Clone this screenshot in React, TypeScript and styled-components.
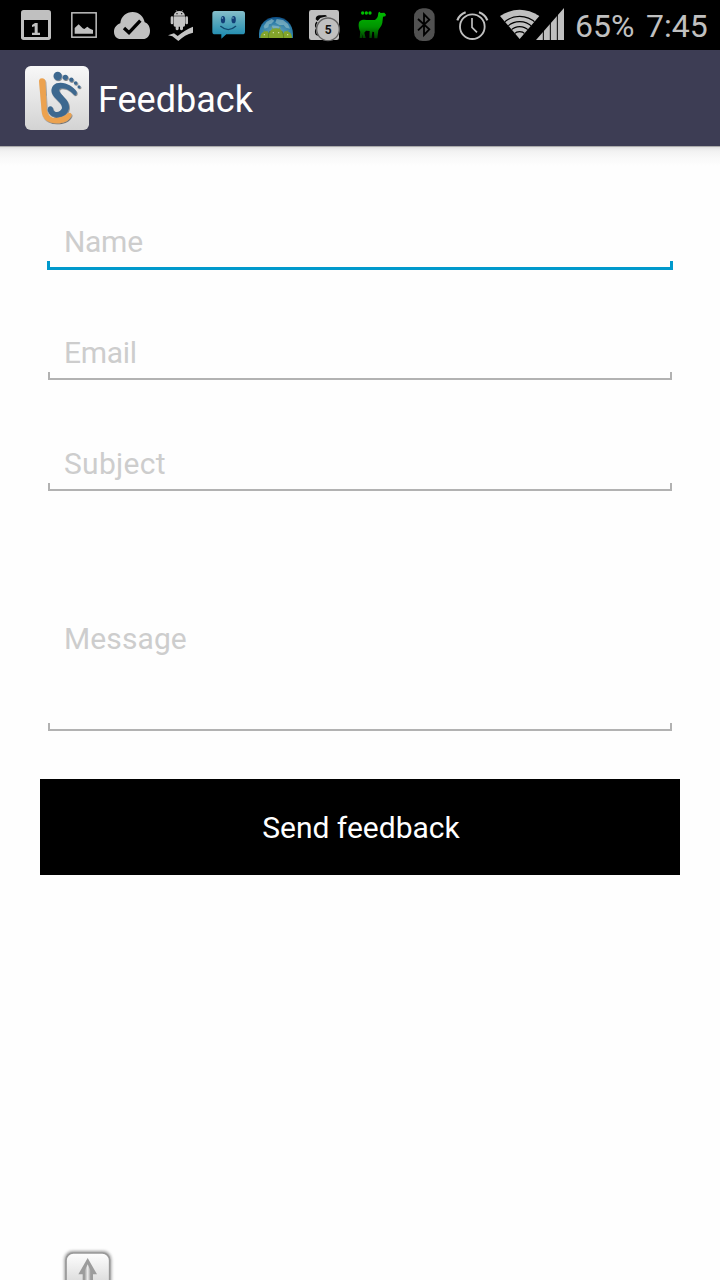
import React from "react";
import styled, { createGlobalStyle } from "styled-components";

const GlobalStyle = createGlobalStyle`
  *, *::before, *::after { box-sizing: border-box; }
  body { margin: 0; background: #fefefe; font-family: Roboto, "Liberation Sans", sans-serif; }
`;

const Screen = styled.div`
  width: 720px;
  height: 1280px;
  display: flex;
  flex-direction: column;
  overflow: hidden;
  background: #fefefe;
`;

const StatusBar = styled.header`
  height: 50px;
  flex: none;
  display: flex;
  align-items: center;
  padding-left: 12px;
  background: #000;
  color: #c0c0c0;
`;

const StatusIcon = styled.svg<{ $width?: number; $gapBefore?: number }>`
  display: block;
  flex: none;
  width: ${(p) => p.$width ?? 48}px;
  height: 50px;
  margin-left: ${(p) => p.$gapBefore ?? 0}px;
`;

const StatusText = styled.span<{ $width: number }>`
  flex: none;
  width: ${(p) => p.$width}px;
  font-size: 32px;
  line-height: 38px;
  padding-top: 2px;
  white-space: nowrap;
`;

const StatusReadout = styled.div`
  display: flex;
  padding-left: 7px;
`;

const ActionBar = styled.div`
  height: 96px;
  flex: none;
  display: flex;
  align-items: center;
  gap: 9px;
  padding-left: 25px;
  background: #3d3d54;
`;

const AppLogo = styled.svg`
  display: block;
  width: 64px;
  height: 64px;
`;

const Title = styled.h1`
  margin: 0;
  padding-top: 4px;
  font-size: 36px;
  line-height: 42px;
  font-weight: 400;
  color: #fff;
`;

const BarShadow = styled.div`
  height: 20px;
  flex: none;
  background: linear-gradient(#a6a6a6 0, #b0b0b0 1px, #e0e0e0 1px, #ececec 3px, #f3f3f3 6px, #f9f9f9 12px, #fefefe 20px);
`;

const Form = styled.form`
  flex: 1;
  display: flex;
  flex-direction: column;
  padding: 58px 40px 0;
`;

const Field = styled.label<{ $height: number }>`
  display: flex;
  flex-direction: column;
  flex: none;
  height: ${(p) => p.$height}px;
`;

const Hint = styled.span<{ $spacing?: number }>`
  padding-left: 24px;
  font-size: 30px;
  line-height: 36px;
  letter-spacing: ${(p) => p.$spacing ?? 0}px;
  color: #cdcdcd;
`;

const Underline = styled.span<{ $active?: boolean; $offset?: number }>`
  display: block;
  margin: ${(p) => p.$offset ?? 1}px ${(p) => (p.$active ? 7 : 8)}px 0;
  height: ${(p) => (p.$active ? 9 : 8)}px;
  border: ${(p) => (p.$active ? "3px solid #0099cc" : "2px solid #b2b2b2")};
  border-top: 0;
`;

const SendButton = styled.button`
  height: 96px;
  flex: none;
  border: 0;
  padding: 2px 0 0 2px;
  background: #000;
  color: #fff;
  font-family: inherit;
  font-size: 30px;
  line-height: 36px;
`;

const Footer = styled.footer`
  flex: none;
  height: 36px;
  padding-left: 58px;
`;

const UpIcon = styled.svg`
  display: block;
  width: 60px;
  height: 36px;
`;

const CalendarIcon = () => (
  <StatusIcon viewBox="36 0 144 150">
    <rect x="63" y="30" width="90" height="90" rx="8" fill="#c0c0c0" />
    <path d="M72 60H144V111H72Z" fill="#000" />
    <path d="M96 75L105 69H113V98H120V105H96V98H104V79L96 81Z" fill="#c0c0c0" />
  </StatusIcon>
);

const PictureIcon = () => (
  <StatusIcon viewBox="180 0 144 150">
    <rect x="215.500" y="38.500" width="73" height="73" fill="none" stroke="#c0c0c0" strokeWidth="4.500" />
    <path d="M224 101V84L236 73L248 85L253 87L262 80L270 86L279 90V101Z" fill="#c0c0c0" />
  </StatusIcon>
);

const CloudIcon = () => (
  <StatusIcon viewBox="324 0 144 150">
    <path
      d="M363 117C349 117 342 107 342 95C342 83 350 74 361 70C363 49 379 36 398 36C417 36 431 49 434 67C445 71 450 81 450 92C450 107 442 117 428 117Z"
      fill="#c0c0c0"
    />
    <path d="M372 84L387 98L421 62" fill="none" stroke="#000" strokeWidth="10" />
  </StatusIcon>
);

const AndroidCheckIcon = () => (
  <StatusIcon viewBox="3 0 144 150">
    <g fill="#c4c4c4">
      <path d="M56 47C57 38 64 33 73 33C82 33 89 38 90 47Z" />
      <path d="M56 49H90V76Q90 80 86 80H84V88Q79 94 75 88V80H71V88Q66 94 62 88V80H60Q56 80 56 76Z" />
      <rect x="47" y="49" width="8" height="24" rx="4" />
      <rect x="91" y="49" width="8" height="24" rx="4" />
      <path d="M63 30L67 37M83 30L79 37" stroke="#c4c4c4" strokeWidth="1.500" />
      <path d="M39 106L57 100L68 108C82 95 98 87 114 80V98C97 101 83 111 70 123L52 109Z" />
    </g>
    <circle cx="66" cy="41" r="2" fill="#000" />
    <circle cx="80" cy="41" r="2" fill="#000" />
  </StatusIcon>
);

const SmileIcon = () => (
  <StatusIcon viewBox="147 0 144 150">
    <defs>
      <linearGradient id="bubble" x2="0" y2="1">
        <stop offset="0" stopColor="#86bfcb" />
        <stop offset=".35" stopColor="#5ba9bd" />
        <stop offset="1" stopColor="#1587af" />
      </linearGradient>
    </defs>
    <path
      d="M180 33H262Q270 33 270 41V95Q270 103 262 103H214L199 116V103H180Q172 103 172 95V41Q172 33 180 33Z"
      fill="url(#bubble)"
    />
    <ellipse cx="204" cy="59" rx="6.500" ry="11" fill="#123f78" />
    <ellipse cx="236" cy="59" rx="6.500" ry="11" fill="#123f78" />
    <circle cx="202" cy="54" r="2.500" fill="#79b7cb" />
    <circle cx="234" cy="54" r="2.500" fill="#79b7cb" />
    <path d="M197 79Q220 99 242 79" fill="none" stroke="#124970" strokeWidth="4" strokeLinecap="round" />
  </StatusIcon>
);

const GlobeIcon = () => (
  <StatusIcon viewBox="291 0 144 150">
    <defs>
      <radialGradient id="globe" cx=".5" cy=".75" r=".75">
        <stop offset="0" stopColor="#72a9bb" />
        <stop offset=".65" stopColor="#2d7ea8" />
        <stop offset="1" stopColor="#0c4d86" />
      </radialGradient>
    </defs>
    <path d="M312 114V102C312 73 334 51 363 51C392 51 414 73 414 102V114Z" fill="url(#globe)" />
    <path
      d="M326 79L335 65L350 57L358 62L349 71L342 73L340 82L329 86ZM365 57L384 60L399 72L405 86L393 83L386 75L373 75L361 68ZM352 76L371 79L378 85H350Z"
      fill="#8fbdc8"
      opacity=".65"
    />
    <g fill="#83a52b">
      <path d="M341 114C339 97 348 85 363 85C379 85 387 97 386 114Z" />
      <path d="M316 114C316 99 325 92 338 94L348 114ZM378 114L389 94C402 92 411 100 411 114Z" />
      <path d="M350 80L355 90M376 80L371 90M326 90L331 98M400 90L395 98" stroke="#83a52b" strokeWidth="2" />
    </g>
    <path d="M341 114C339 106 341 99 345 93M386 114C386 105 384 99 381 94" fill="none" stroke="#4f7820" strokeWidth="2" />
    <g fill="#dbe5bd">
      <circle cx="355" cy="98" r="2" />
      <circle cx="371" cy="98" r="2" />
      <circle cx="328" cy="104" r="2" />
      <circle cx="398" cy="104" r="2" />
    </g>
  </StatusIcon>
);

const BadgeIcon = () => (
  <StatusIcon viewBox="15 0 144 150">
    <rect x="42" y="30" width="90" height="90" rx="7" fill="#c0c0c0" />
    <path d="M62 58C62 47 70 44 79 46L91 45L97 49L84 52L76 54L68 63Z" fill="#080808" />
    <path d="M66 66Q58 76 65 84Q59 96 64 103L72 106" fill="none" stroke="#080808" strokeWidth="4" />
    <circle cx="99" cy="88" r="34" fill="#c0c0c0" stroke="#626262" strokeWidth="4" />
    <text
      x="99.500"
      y="102"
      textAnchor="middle"
      fontFamily="Roboto, sans-serif"
      fontWeight="700"
      fontSize="36"
      fill="#111"
    >
      5
    </text>
  </StatusIcon>
);

const LlamaIcon = () => (
  <StatusIcon viewBox="159 0 144 150">
    <defs>
      <linearGradient id="llama" gradientUnits="userSpaceOnUse" x1="0" y1="35" x2="0" y2="118">
        <stop offset="0" stopColor="#00bd00" />
        <stop offset=".55" stopColor="#009400" />
        <stop offset="1" stopColor="#003a00" />
      </linearGradient>
    </defs>
    <path
      d="M250 38L253 35L257 39L268 38L273 44L271 49L264 50L262 69C260 79 253 84 250 91L247 115H238L237 96L232 95L230 114H223L224 93L213 92L208 98L212 114H204L200 99L202 114H194L196 95C190 84 189 68 195 63C202 57 213 60 222 60C232 60 239 62 244 56C249 51 249 46 250 38Z"
      fill="url(#llama)"
    />
    <g fill="#00c000">
      <circle cx="203" cy="39" r="5" />
      <circle cx="214" cy="39" r="5" />
      <circle cx="225" cy="39" r="5" />
    </g>
  </StatusIcon>
);

const BluetoothIcon = () => (
  <StatusIcon viewBox="315 0 144 150" $gapBefore={4}>
    <rect x="357" y="25" width="62" height="98" rx="26" fill="#515151" />
    <path d="M369 57L403 88L387 105V43L403 59L369 91" fill="none" stroke="#000" strokeWidth="5.500" />
  </StatusIcon>
);

const AlarmIcon = () => (
  <StatusIcon viewBox="24 0 144 150">
    <g fill="none" stroke="#c0c0c0">
      <circle cx="97" cy="80" r="37" strokeWidth="5.500" />
      <path d="M96 54V82L111 97" strokeWidth="5" />
      <path d="M52 61Q58 44 77 37M117 37Q136 44 142 61" strokeWidth="6.500" />
    </g>
  </StatusIcon>
);

const SignalIcons = () => (
  <StatusIcon viewBox="168 0 216 150" $width={72}>
    <defs>
      <clipPath id="wifiFan">
        <path d="M239 117L180 48Q239 10 298 48Z" />
      </clipPath>
    </defs>
    <path d="M239 117L180 48Q239 10 298 48Z" fill="#c0c0c0" />
    <g clipPath="url(#wifiFan)" fill="none" stroke="#000" strokeWidth="3.500">
      <circle cx="239" cy="118" r="69" />
      <circle cx="239" cy="118" r="53" />
      <circle cx="239" cy="118" r="38" />
      <circle cx="239" cy="118" r="23" />
    </g>
    <path d="M288 120L372 24V120Z" fill="#c0c0c0" />
    <path d="M310 90V121M331 65V121M352 40V121" stroke="#000" strokeWidth="3" />
  </StatusIcon>
);

const FootprintLogo = () => (
  <AppLogo viewBox="45 48 192 192">
    <defs>
      <linearGradient id="tile" x2="0" y2="1">
        <stop offset="0" stopColor="#f8f8f8" />
        <stop offset="1" stopColor="#d3d3d3" />
      </linearGradient>
      <filter id="logoShadow" x="-20%" y="-20%" width="140%" height="140%">
        <feDropShadow dx="2" dy="3" stdDeviation="2" floodOpacity=".5" />
      </filter>
    </defs>
    <rect x="45" y="48" width="192" height="192" rx="17" fill="url(#tile)" />
    <g filter="url(#logoShadow)">
      <path
        d="M87 92Q88 85 96 85Q105 85 106 94L110 177C112 197 123 206 142 204C157 203 166 197 174 190C180 185 187 190 184 198C176 213 160 221 138 220C112 219 97 207 95 184Z"
        fill="#eca24f"
      />
      <path
        d="M113 178Q114 169 121 169Q129 170 130 180C136 190 151 187 156 175C158 163 143 152 132 140C120 126 122 108 139 100C161 92 191 108 200 125Q202 135 193 136C184 125 170 114 155 115C145 116 146 123 153 131C164 144 179 154 177 174C174 193 156 204 138 201C123 200 113 190 113 178Z"
        fill="#3e688f"
      />
      <g fill="#3e688f">
        <circle cx="143" cy="78" r="12.500" />
        <circle cx="166" cy="82" r="8" />
        <circle cx="184" cy="89" r="6.500" />
        <circle cx="197" cy="99" r="5.500" />
        <circle cx="207" cy="110" r="4.500" />
      </g>
    </g>
  </AppLogo>
);

const ScrollUp = () => (
  <UpIcon viewBox="54 42 180 108">
    <defs>
      <linearGradient id="key" gradientUnits="userSpaceOnUse" x1="0" y1="72" x2="0" y2="150">
        <stop offset="0" stopColor="#fdfdfd" />
        <stop offset="1" stopColor="#dfdfdf" />
      </linearGradient>
      <linearGradient id="stem">
        <stop offset="0" stopColor="#a2a2a2" />
        <stop offset=".5" stopColor="#ededed" />
        <stop offset="1" stopColor="#a2a2a2" />
      </linearGradient>
      <filter id="keyBlur" x="-20%" y="-20%" width="140%" height="140%">
        <feGaussianBlur stdDeviation="4" />
      </filter>
    </defs>
    <rect x="73" y="63" width="141" height="120" rx="25" fill="#777" opacity=".7" filter="url(#keyBlur)" />
    <rect x="78" y="69" width="131" height="120" rx="22" fill="url(#key)" stroke="#999" strokeWidth="5" />
    <path d="M143 84L171 133H159V165H128V133H115Z" fill="#9c9c9c" />
    <path d="M143 103L152 122V165H134V122Z" fill="url(#stem)" />
  </UpIcon>
);

export default function App() {
  return (
    <>
      <GlobalStyle />
      <Screen>
        <StatusBar>
          <CalendarIcon />
          <PictureIcon />
          <CloudIcon />
          <AndroidCheckIcon />
          <SmileIcon />
          <GlobeIcon />
          <BadgeIcon />
          <LlamaIcon />
          <BluetoothIcon />
          <AlarmIcon />
          <SignalIcons />
          <StatusReadout>
            <StatusText $width={71}>65%</StatusText>
            <StatusText $width={70}>7:45</StatusText>
          </StatusReadout>
        </StatusBar>
        <ActionBar>
          <FootprintLogo />
          <Title>Feedback</Title>
        </ActionBar>
        <BarShadow />
        <Form>
          <Field $height={111}>
            <Hint $spacing={-0.3}>Name</Hint>
            <Underline $active />
          </Field>
          <Field $height={111}>
            <Hint $spacing={-0.3}>Email</Hint>
            <Underline />
          </Field>
          <Field $height={175}>
            <Hint $spacing={0.3}>Subject</Hint>
            <Underline />
          </Field>
          <Field $height={158}>
            <Hint $spacing={0.1}>Message</Hint>
            <Underline $offset={66} />
          </Field>
          <SendButton type="button">Send feedback</SendButton>
        </Form>
        <Footer>
          <ScrollUp />
        </Footer>
      </Screen>
    </>
  );
}
